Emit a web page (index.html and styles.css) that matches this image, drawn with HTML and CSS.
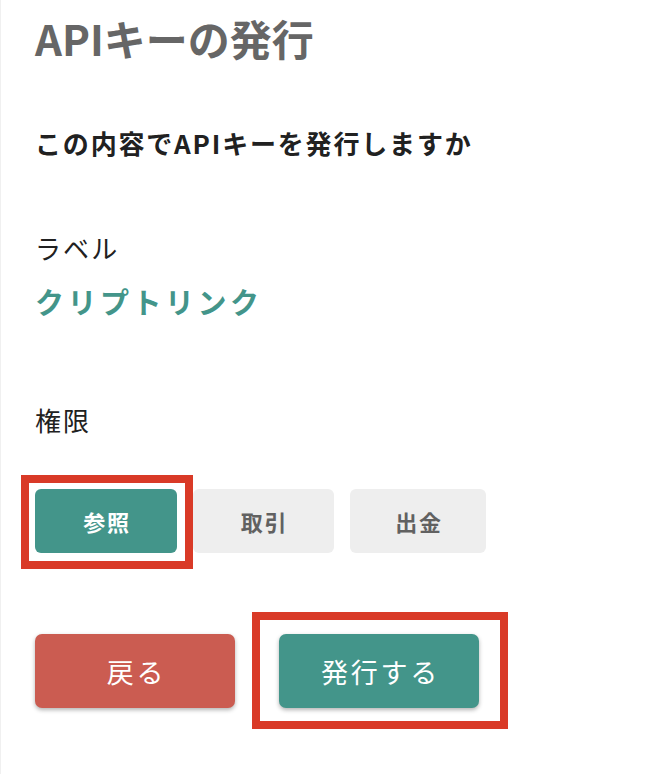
FILE: index.html
```html
<!DOCTYPE html>
<html lang="ja">
<head>
<meta charset="utf-8">
<title>APIキーの発行</title>
<link rel="stylesheet" href="styles.css">
</head>
<body>
<main class="page">
  <h1 class="title">APIキーの発行</h1>
  <p class="lead">この内容でAPIキーを発行しますか</p>
  <section class="field field-label-block">
    <div class="field-label">ラベル</div>
    <div class="field-value">クリプトリンク</div>
  </section>
  <section class="field field-perm-block">
    <div class="field-label">権限</div>
    <div class="perms">
      <button class="perm perm-active mark mark-perm" type="button">参照</button>
      <button class="perm" type="button">取引</button>
      <button class="perm" type="button">出金</button>
    </div>
  </section>
  <div class="actions">
    <button class="action action-back" type="button">戻る</button>
    <button class="action action-issue mark mark-action" type="button">発行する</button>
  </div>
</main>
</body>
</html>
```

FILE: styles.css
```css
html, body {
  margin: 0;
  padding: 0;
  background: #ffffff;
}
body {
  width: 664px;
  height: 774px;
  overflow: hidden;
  font-family: "Noto Sans CJK JP", "Noto Sans", sans-serif;
  color: #212121;
  border-left: 1px solid #f0f0f0;
  box-sizing: border-box;
}
.page {
  padding: 13px 0 0 34px;
}
.title {
  margin: 0;
  font-size: 42px;
  line-height: 50px;
  font-weight: 700;
  color: #666666;
  letter-spacing: 0;
}
.lead {
  margin: 62px 0 0;
  font-size: 26px;
  line-height: 36px;
  font-weight: 700;
  color: #212121;
  letter-spacing: 0.07em;
}
.field-label-block {
  margin-top: 70px;
}
.field-label {
  font-size: 26px;
  line-height: 34px;
  font-weight: 400;
  color: #212121;
  letter-spacing: 0.08em;
}
.field-value {
  margin-top: 16px;
  font-size: 29px;
  line-height: 40px;
  font-weight: 700;
  color: #43958a;
  letter-spacing: 0.12em;
}
.field-perm-block {
  margin-top: 82px;
}
.perms {
  margin-top: 52px;
  display: flex;
  gap: 16px;
}
.perm {
  width: 142px;
  height: 64px;
  border: none;
  border-radius: 6px;
  background: #eeeeee;
  color: #616161;
  font-family: inherit;
  font-size: 22px;
  font-weight: 700;
  letter-spacing: 0.08em;
  padding: 0 0 0 2px;
}
.perm:nth-child(2) { width: 141px; }
.perm:nth-child(3) { width: 136px; }
.perm-active {
  background: #43958a;
  color: #ffffff;
}
.actions {
  margin-top: 81px;
  display: flex;
  gap: 44px;
}
.action {
  width: 200px;
  height: 74px;
  border: none;
  border-radius: 7px;
  font-family: inherit;
  font-size: 27px;
  font-weight: 400;
  color: #ffffff;
  letter-spacing: 0.1em;
  padding: 0 0 0 3px;
  box-shadow: 0 2px 4px rgba(0, 0, 0, 0.3);
}
.action-back {
  background: #cb5c51;
}
.action-issue {
  background: #43958a;
}
.mark {
  position: relative;
}
.mark::after {
  content: "";
  position: absolute;
  border: 8px solid #d93a27;
  pointer-events: none;
}
.mark-perm::after {
  inset: -14px -16px -16px -14px;
}
.mark-action::after {
  inset: -22px -29px -21px -27px;
}
```
